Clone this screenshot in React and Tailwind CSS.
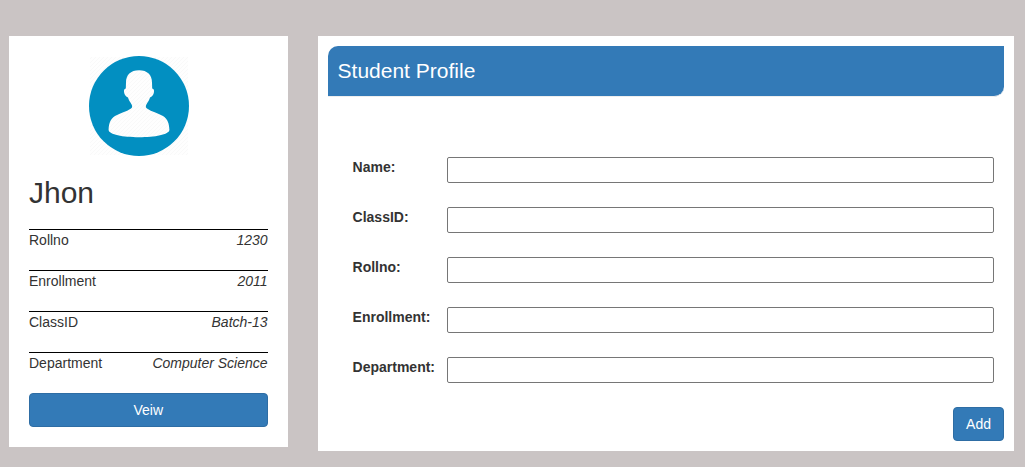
const details = [
  ["Rollno", "1230"],
  ["Enrollment", "2011"],
  ["ClassID", "Batch-13"],
  ["Department", "Computer Science"],
];

const fields = ["Name", "ClassID", "Rollno", "Enrollment", "Department"];

function Avatar() {
  return (
    <svg viewBox="0 0 100 100" className="ml-[25%] block size-[100px]" role="img" aria-label="Student avatar">
      <defs>
        <pattern id="hatch" width="4" height="4" patternUnits="userSpaceOnUse">
          <rect width="4" height="4" fill="#fefefe" />
          <path d="M-1 1L1 -1M0 4L4 0M3 5L5 3" stroke="#f9f9f9" strokeWidth="1" />
        </pattern>
      </defs>
      <rect x="1" y="1" width="98" height="98" fill="url(#hatch)" />
      <circle cx="50" cy="50" r="50" fill="#028fc1" />
      <path
        fill="url(#hatch)"
        d="M50 14.2C41.5 14.2 37 19 37 26.5L36.8 32.4C35 32.6 34.6 34.4 35.2 37C35.8 39.2 37 41 39 41.4C39.8 44 41.3 46.2 42.6 48.4C43.6 50.3 43.3 51.6 41.6 52.8C37.5 55.7 31.5 56.8 26 60C21 63.2 19.8 68 19.6 74C20 78.6 34 81.2 50 81.2C66 81.2 80 78.6 80.4 74C80.2 68 79 63.2 74 60C68.5 56.8 62.5 55.7 58.4 52.8C56.7 51.6 56.4 50.3 57.4 48.4C58.7 46.2 60.2 44 61 41.4C63 41 64.2 39.2 64.8 37C65.4 34.4 65 32.6 63.2 32.4L63 26.5C63 19 58.5 14.2 50 14.2Z"
      />
    </svg>
  );
}

export default function App() {
  return (
    <div className="min-h-screen bg-[#cac4c4] pt-9 pr-[11px] pb-4 pl-[9px] font-['Liberation_Sans',Arial,sans-serif] text-sm leading-5 text-[#333]">
      <main className="grid grid-cols-[2fr_5fr] items-start gap-[30px]">
        <section className="bg-white p-5">
          <Avatar />
          <h2 className="my-5 text-[30px] leading-[33px]">Jhon</h2>
          <dl className="flex flex-col gap-5">
            {details.map(([name, value]) => (
              <div key={name} className="flex justify-between border-t border-black">
                <dt>{name}</dt>
                <dd className="italic">{value}</dd>
              </div>
            ))}
          </dl>
          <button type="button" className="mt-5 block w-full rounded border border-[#2e6da4] bg-[#337ab7] py-1.5 text-white">
            Veiw
          </button>
        </section>

        <section className="bg-white p-2.5">
          <h1 className="rounded-tl-[10px] rounded-br-[10px] border-b border-[#eee] bg-[#337ab7] p-2.5 text-[21px] leading-[30px] text-white">
            Student Profile
          </h1>
          <form className="mt-[60px]" onSubmit={(e) => e.preventDefault()}>
            <div className="flex flex-col gap-6 pr-2.5 pl-[25px]">
              {fields.map((name) => (
                <div key={name} className="flex items-start">
                  <label htmlFor={name} className="w-[94px] shrink-0 font-bold">
                    {name}:
                  </label>
                  <input
                    id={name}
                    type="text"
                    className="h-[26px] min-w-0 flex-1 rounded-[2px] border border-[#767676] bg-white px-1"
                  />
                </div>
              ))}
            </div>
            <div className="mt-6 flex justify-end">
              <button type="submit" className="rounded border border-[#2e6da4] bg-[#337ab7] px-3 py-1.5 text-white">
                Add
              </button>
            </div>
          </form>
        </section>
      </main>
    </div>
  );
}
